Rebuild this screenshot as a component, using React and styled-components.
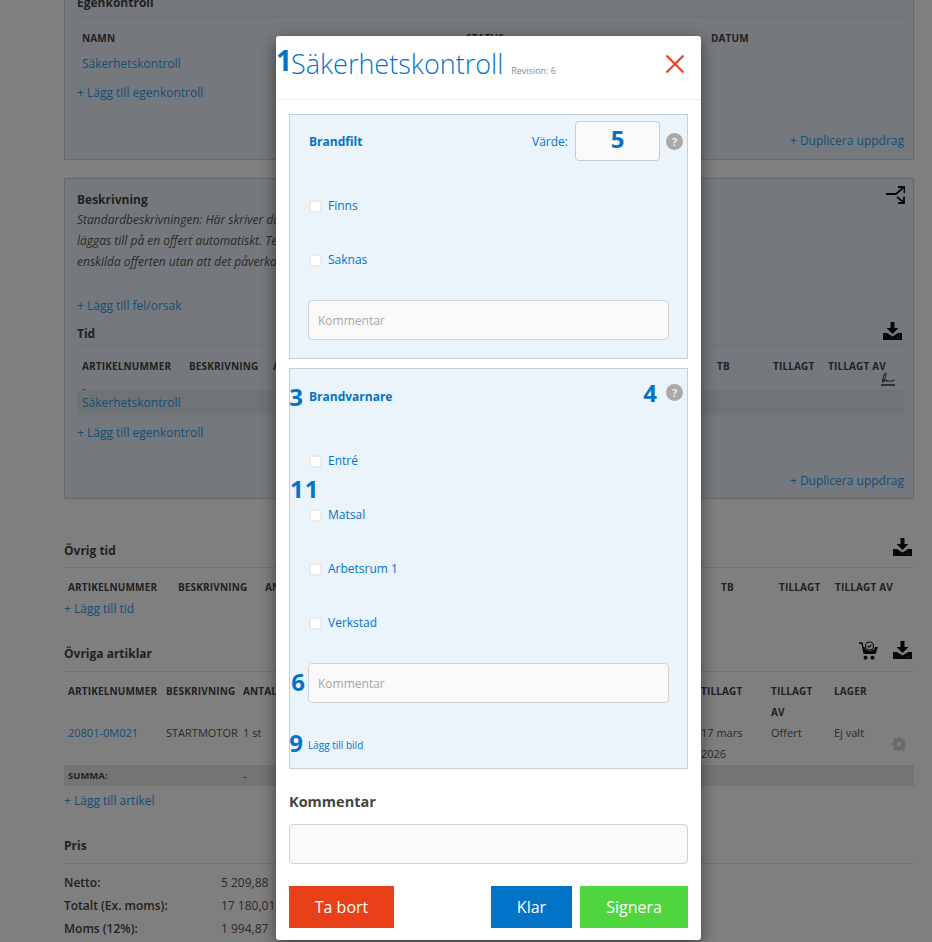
import React from 'react'
import styled, { createGlobalStyle } from 'styled-components'

const GlobalStyle = createGlobalStyle`
    html, body {
        margin: 0;
        padding: 0;
        background: #ffffff;
        font-family: 'Open Sans', sans-serif;
        font-size: 12px;
        color: #555555;
    }
`

const BLUE = '#0373c8'
const DIM_LINK = '#2d9bee'

const DownloadIcon = () => (
    <svg width="19" height="18" viewBox="0 0 19 18">
        <path d="M7.500 0h4v6h4l-6 6-6-6h4z" fill="#111" />
        <path d="M0 11h4l5.500 3.500L15 11h4v7H0z" fill="#111" />
        <rect x="14" y="15.500" width="1" height="1" fill="#777" />
        <rect x="16" y="15.500" width="1" height="1" fill="#777" />
    </svg>
)

const SplitIcon = () => (
    <svg width="19" height="18" viewBox="0 0 19 18" fill="none" stroke="#111" strokeWidth="1.8">
        <path d="M0 8h10l8-7" />
        <path d="M12 1h6.500v6" />
        <path d="M11 11l7 5.500" />
        <path d="M18 10.500V17h-6" />
    </svg>
)

const SignatureIcon = () => (
    <svg width="15" height="14" viewBox="0 0 15 14" fill="none" stroke="#111" strokeWidth="0.9">
        <path d="M1.500 9.500C2 6 3 1.500 4.500 1c1.500 0-.5 6-2.500 8.500C1 10.500 3 10.500 5 7.500c0 2 .5 2.500 1.500 1 .5 1.500 1 1.500 2 0 1 .500 1 1.500 2.500 .5l2.500-1" />
        <path d="M0 13h14" strokeWidth="1.300" />
    </svg>
)

const CartIcon = () => (
    <svg width="19" height="19" viewBox="0 0 19 19" fill="none">
        <path d="M0 2h3l2 10h11" stroke="#111" strokeWidth="1.300" />
        <path d="M4 6h1.500a5.500 5.500 0 0 0 10.500 0h3l-2.500 7H5.500z" fill="#111" />
        <circle cx="10.500" cy="5" r="4" stroke="#111" strokeWidth="1.100" />
        <path d="M8.800 5l1.300 1.300 2.300-2.500" stroke="#111" strokeWidth="1.100" />
        <circle cx="6.500" cy="16.800" r="2" fill="#111" />
        <circle cx="13.500" cy="16.800" r="2" fill="#111" />
    </svg>
)

const GearIcon = () => (
    <svg width="14" height="14" viewBox="0 0 14 14">
        <path
            fill="#d4d4d4"
            fillRule="evenodd"
            d="M5.700 0h2.600l.3 1.900 1.200.5 1.600-1.100 1.800 1.800-1.100 1.600.5 1.200 1.900.3v2.600l-1.900.3-.5 1.200 1.100 1.600-1.800 1.800-1.600-1.100-1.200.5-.3 1.900H5.700l-.3-1.900-1.200-.5-1.600 1.100-1.800-1.800 1.100-1.600-.5-1.200L0 8.300V5.700l1.900-.3.5-1.200-1.100-1.600 1.800-1.800 1.600 1.100 1.200-.5zM7 4.700a2.300 2.300 0 1 0 0 4.600 2.300 2.300 0 0 0 0-4.600z"
        />
    </svg>
)

const CloseIcon = () => (
    <svg width="20" height="20" viewBox="0 0 20 20" fill="none" stroke="#e8431a" strokeWidth="2.200">
        <path d="M1.500 1.500l17 17M18.500 1.500l-17 17" />
    </svg>
)

const Page = styled.div`
    position: relative;
    width: 932px;
    height: 942px;
    overflow: hidden;
`

const Content = styled.div`
    width: 850px;
    margin: -8px 0 0 64px;
`

const Panel = styled.section`
    box-sizing: border-box;
    width: 850px;
    padding: ${({ $top }) => $top}px 9px ${({ $bottom }) => $bottom}px 12px;
    margin-bottom: 18px;
    background: #ebf3fb;
    border: 1px solid #cdd3d8;
`

const HeadingRow = styled.div`
    display: flex;
    justify-content: space-between;
    align-items: flex-start;
    margin-top: ${({ $mt }) => $mt ?? 0}px;
    padding-bottom: ${({ $pad }) => $pad ?? 3}px;
    border-bottom: ${({ $plain }) => ($plain ? 'none' : '1px solid #e4e4e4')};
`

const Heading = styled.h3`
    margin: 0;
    font-size: 12px;
    line-height: 20px;
    font-weight: 700;
    color: #444444;
`

const Icons = styled.div`
    display: flex;
    gap: 15px;
    margin-top: ${({ $up }) => -($up ?? 0)}px;
    margin-right: ${({ $right }) => $right ?? 2}px;
    height: 18px;
`

const Description = styled.p`
    margin: ${({ $mt }) => $mt ?? 0}px 0 0;
    font-size: 12px;
    line-height: 21px;
    font-style: italic;
    color: #555555;
    white-space: nowrap;
`

const TableGrid = styled.div`
    display: grid;
    grid-template-columns: ${({ $cols }) => $cols};
    padding-left: ${({ $indent }) => $indent}px;
    margin-top: ${({ $mt }) => $mt ?? 0}px;
    height: ${({ $h }) => ($h ? `${$h}px` : 'auto')};
    align-items: ${({ $center }) => ($center ? 'center' : 'start')};
    background: ${({ $shade }) => $shade ?? 'transparent'};
`

const HeadCell = styled.div`
    font-size: 10px;
    line-height: 21px;
    font-weight: 700;
    color: #444444;
    white-space: nowrap;
    letter-spacing: 0.15px;
    ${({ $wrap }) => $wrap && 'white-space: normal; width: 50px;'}
`

const Cell = styled.div`
    position: relative;
    font-size: 11px;
    line-height: 21px;
    color: #555555;
    ${({ $wrap }) => $wrap && 'width: 50px;'}
`

const TableLink = styled.a`
    font-size: ${({ $small }) => ($small ? 11 : 12)}px;
    line-height: ${({ $small }) => ($small ? 21 : 25)}px;
    color: ${DIM_LINK};
`

const SumLabel = styled.div`
    font-size: 9.5px;
    font-weight: 700;
    color: #444444;
`

const AddLink = styled.a`
    display: block;
    font-size: 12px;
    line-height: 20px;
    margin-top: ${({ $mt }) => $mt ?? 0}px;
    color: ${DIM_LINK};
    text-align: ${({ $right }) => ($right ? 'right' : 'left')};
`

const PlainSection = styled.section`
    margin-top: ${({ $mt }) => $mt}px;
`

const SignatureSlot = styled.span`
    position: absolute;
    right: 8px;
    top: 15px;
`

const GearSlot = styled.span`
    position: absolute;
    right: 8px;
    top: 14px;
`

const PriceRow = styled.div`
    display: grid;
    grid-template-columns: 157px 1fr;
    font-size: 12px;
    line-height: 23px;
    color: #555555;
`

const PriceLabel = styled.span`
    font-weight: 600;
    color: #444444;
`

const Backdrop = styled.div`
    position: absolute;
    inset: 0;
    background: rgba(0, 0, 0, 0.5);
`

const Modal = styled.div`
    position: absolute;
    left: 276px;
    top: 36px;
    box-sizing: border-box;
    width: 425px;
    height: 904px;
    background: #ffffff;
    border-radius: 3px;
    box-shadow: 0 5px 15px rgba(0, 0, 0, 0.5);
`

const ModalHeader = styled.header`
    position: relative;
    display: flex;
    align-items: center;
    box-sizing: border-box;
    height: 64px;
    padding: 0 16px 8px 15px;
    border-bottom: 1px solid #eeeeee;
`

const ModalTitle = styled.h2`
    margin: 0;
    font-size: 27px;
    line-height: 56px;
    font-weight: 300;
    color: ${BLUE};
    white-space: nowrap;
`

const Revision = styled.span`
    margin: 14px 0 0 8px;
    font-size: 9px;
    color: #888888;
`

const CloseButton = styled.button`
    display: flex;
    margin-left: auto;
    padding: 0;
    border: 0;
    background: none;
`

const ModalBody = styled.div`
    padding: 14px 13px 0;
`

const CheckSection = styled.section`
    position: relative;
    box-sizing: border-box;
    padding: ${({ $top }) => $top}px 4px ${({ $bottom }) => $bottom}px 18px;
    margin-bottom: 9px;
    background: #ebf3fb;
    border: 1px solid #c9cfd4;
`

const SectionHead = styled.div`
    display: flex;
    align-items: center;
    height: 40px;
    margin-bottom: 17px;
`

const SectionTitle = styled.h4`
    position: relative;
    margin: 0 auto 0 1px;
    font-size: 12px;
    font-weight: 700;
    color: ${BLUE};
`

const ValueLabel = styled.span`
    margin-right: 7px;
    font-size: 12px;
    color: ${BLUE};
`

const ValueBox = styled.div`
    box-sizing: border-box;
    width: 85px;
    height: 40px;
    margin-right: 6px;
    font-size: 24px;
    font-weight: 700;
    line-height: 34px;
    text-align: center;
    color: ${BLUE};
    background: #f9f9f9;
    border: 1px solid #cccccc;
    border-radius: 4px;
`

const Help = styled.span`
    position: relative;
    top: ${({ $up }) => ($up ? -4 : 0)}px;
    display: flex;
    align-items: center;
    justify-content: center;
    width: 17px;
    height: 17px;
    font-size: 11px;
    font-weight: 700;
    color: #eeeeee;
    background: #a9a9a9;
    border-radius: 50%;
`

const CheckRow = styled.label`
    display: flex;
    align-items: center;
    gap: 6px;
    box-sizing: border-box;
    height: 54px;
    padding-left: 1px;
    font-size: 12px;
    color: ${BLUE};
`

const CheckBox = styled.span`
    box-sizing: border-box;
    width: 13px;
    height: 13px;
    margin-top: 2px;
    background: #ffffff;
    border: 2px solid #ebebeb;
    border-radius: 3px;
`

const InputWrap = styled.div`
    position: relative;
    margin-top: 14px;
`

const FakeInput = styled.div`
    box-sizing: border-box;
    width: ${({ $w }) => $w}px;
    height: 40px;
    padding-left: 9px;
    font-size: 12px;
    line-height: 40px;
    color: #a8a8a8;
    background: #f9f9f9;
    border: 1px solid #d2d2d2;
    border-radius: 4px;
`

const ImageRow = styled.div`
    position: relative;
    margin-top: 32px;
    font-size: 10px;
    line-height: 20px;
    color: ${BLUE};
`

const Marker = styled.span`
    position: absolute;
    font-size: ${({ $size }) => $size ?? 24}px;
    line-height: 30px;
    font-weight: 700;
    color: ${BLUE};
    ${({ $pos }) => $pos}
`

const InlineMarker = styled.span`
    position: relative;
    top: -3px;
    margin-right: 9px;
    font-size: 24px;
    line-height: 30px;
    font-weight: 700;
    color: ${BLUE};
`

const CommentLabel = styled.div`
    margin-top: 23px;
    font-size: 14.5px;
    line-height: 20px;
    font-weight: 700;
    color: #444444;
`

const CommentBox = styled(FakeInput)`
    margin-top: 12px;
`

const Actions = styled.div`
    display: flex;
    gap: 8px;
    margin-top: 22px;
`

const ActionButton = styled.button`
    width: ${({ $w }) => $w}px;
    height: 42px;
    margin-right: ${({ $push }) => ($push ? 'auto' : '0')};
    padding: 0;
    font-family: 'Open Sans', sans-serif;
    font-size: 16px;
    color: #ffffff;
    background: ${({ $bg }) => $bg};
    border: 0;
`

const timeCols = '107px 84px 444px 56px 55px 1fr'
const otherCols = '110px 87px 456px 58px 56px 1fr'
const articleCols = '98px 77px 458px 70px 63px 1fr'

const Background = () => (
    <Content>
        <Panel $top={0} $bottom={8}>
            <HeadingRow><Heading>Egenkontroll</Heading></HeadingRow>
            <TableGrid $cols="384px 245px 1fr" $indent={5} $mt={11}>
                <HeadCell>NAMN</HeadCell>
                <HeadCell>STATUS</HeadCell>
                <HeadCell>DATUM</HeadCell>
            </TableGrid>
            <TableGrid $cols="1fr" $indent={5} $mt={2}>
                <TableLink>Säkerhetskontroll</TableLink>
            </TableGrid>
            <AddLink $mt={7}>+ Lägg till egenkontroll</AddLink>
            <AddLink $mt={28} $right>+ Duplicera uppdrag</AddLink>
        </Panel>

        <Panel $top={11} $bottom={7}>
            <HeadingRow $plain $pad={0}>
                <Heading>Beskrivning</Heading>
                <Icons $right={-1} $up={4}><SplitIcon /></Icons>
            </HeadingRow>
            <Description $mt={-1}>Standardbeskrivningen: Här skriver du in en standardbeskrivning som ska</Description>
            <Description>läggas till på en offert automatiskt. Texten kan sedan redigeras på den</Description>
            <Description>enskilda offerten utan att det påverkar standardbeskrivningen.</Description>
            <AddLink $mt={24}>+ Lägg till fel/orsak</AddLink>
            <HeadingRow $mt={8} $pad={1}>
                <Heading>Tid</Heading>
                <Icons $up={2}><DownloadIcon /></Icons>
            </HeadingRow>
            <TableGrid $cols={timeCols} $indent={5} $mt={10}>
                <HeadCell>ARTIKELNUMMER</HeadCell>
                <HeadCell>BESKRIVNING</HeadCell>
                <HeadCell>ANTAL</HeadCell>
                <HeadCell>TB</HeadCell>
                <HeadCell>TILLAGT</HeadCell>
                <Cell>
                    <HeadCell>TILLAGT AV</HeadCell>
                    <SignatureSlot><SignatureIcon /></SignatureSlot>
                </Cell>
            </TableGrid>
            <TableGrid $cols="1fr" $indent={5} $h={13} $center>
                <Cell>-</Cell>
            </TableGrid>
            <TableGrid $cols="1fr" $indent={5} $h={25} $shade="#dfe6ea">
                <TableLink>Säkerhetskontroll</TableLink>
            </TableGrid>
            <AddLink $mt={8}>+ Lägg till egenkontroll</AddLink>
            <AddLink $mt={28} $right>+ Duplicera uppdrag</AddLink>
        </Panel>

        <PlainSection $mt={42}>
            <HeadingRow $pad={6}>
                <Heading>Övrig tid</Heading>
                <Icons $up={3}><DownloadIcon /></Icons>
            </HeadingRow>
            <TableGrid $cols={otherCols} $indent={4} $mt={9}>
                <HeadCell>ARTIKELNUMMER</HeadCell>
                <HeadCell>BESKRIVNING</HeadCell>
                <HeadCell>ANTAL</HeadCell>
                <HeadCell>TB</HeadCell>
                <HeadCell>TILLAGT</HeadCell>
                <HeadCell>TILLAGT AV</HeadCell>
            </TableGrid>
            <AddLink $mt={1}>+ Lägg till tid</AddLink>
        </PlainSection>

        <PlainSection $mt={25}>
            <HeadingRow $pad={7}>
                <Heading>Övriga artiklar</Heading>
                <Icons $up={3}><CartIcon /><DownloadIcon /></Icons>
            </HeadingRow>
            <TableGrid $cols={articleCols} $indent={4} $mt={9}>
                <HeadCell>ARTIKELNUMMER</HeadCell>
                <HeadCell>BESKRIVNING</HeadCell>
                <HeadCell>ANTAL</HeadCell>
                <HeadCell>TILLAGT</HeadCell>
                <HeadCell $wrap>TILLAGT AV</HeadCell>
                <HeadCell>LAGER</HeadCell>
            </TableGrid>
            <TableGrid $cols={articleCols} $indent={4} $mt={-1}>
                <TableLink $small>20801-0M021</TableLink>
                <Cell>STARTMOTOR</Cell>
                <Cell>1 st</Cell>
                <Cell $wrap>17 mars 2026</Cell>
                <Cell>Offert</Cell>
                <Cell>
                    Ej valt
                    <GearSlot><GearIcon /></GearSlot>
                </Cell>
            </TableGrid>
            <TableGrid $cols="175px 1fr" $indent={4} $h={21} $mt={1} $center $shade="#e9e9e9">
                <SumLabel>SUMMA:</SumLabel>
                <Cell>-</Cell>
            </TableGrid>
            <AddLink $mt={5}>+ Lägg till artikel</AddLink>
        </PlainSection>

        <PlainSection $mt={25}>
            <HeadingRow $pad={7}><Heading>Pris</Heading></HeadingRow>
            <TableGrid $cols="1fr" $indent={0} $mt={7}>
                <PriceRow><PriceLabel>Netto:</PriceLabel><span>5 209,88</span></PriceRow>
                <PriceRow><PriceLabel>Totalt (Ex. moms):</PriceLabel><span>17 180,01</span></PriceRow>
                <PriceRow><PriceLabel>Moms (12%):</PriceLabel><span>1 994,87</span></PriceRow>
            </TableGrid>
        </PlainSection>
    </Content>
)

const Check = ({ label }) => (
    <CheckRow><CheckBox />{label}</CheckRow>
)

export default function App() {
    return (
        <Page>
            <GlobalStyle />
            <Background />
            <Backdrop />
            <Modal>
                <ModalHeader>
                    <Marker $size={28} $pos="left: 0; top: 9px;">1</Marker>
                    <ModalTitle>Säkerhetskontroll</ModalTitle>
                    <Revision>Revision: 6</Revision>
                    <CloseButton aria-label="Stäng"><CloseIcon /></CloseButton>
                </ModalHeader>
                <ModalBody>
                    <CheckSection $top={6} $bottom={18}>
                        <SectionHead>
                            <SectionTitle>Brandfilt</SectionTitle>
                            <ValueLabel>Värde:</ValueLabel>
                            <ValueBox>5</ValueBox>
                            <Help>?</Help>
                        </SectionHead>
                        <Check label="Finns" />
                        <Check label="Saknas" />
                        <InputWrap><FakeInput $w={361}>Kommentar</FakeInput></InputWrap>
                    </CheckSection>

                    <CheckSection $top={7} $bottom={13}>
                        <SectionHead>
                            <SectionTitle>
                                <Marker $pos="right: 100%; margin-right: 6px; top: -6px;">3</Marker>
                                Brandvarnare
                            </SectionTitle>
                            <InlineMarker>4</InlineMarker>
                            <Help $up>?</Help>
                        </SectionHead>
                        <Marker $pos="left: 0; top: 105px; letter-spacing: 1px;">11</Marker>
                        <Check label="Entré" />
                        <Check label="Matsal" />
                        <Check label="Arbetsrum 1" />
                        <Check label="Verkstad" />
                        <InputWrap>
                            <Marker $pos="right: 100%; margin-right: 3px; top: 4px;">6</Marker>
                            <FakeInput $w={361}>Kommentar</FakeInput>
                        </InputWrap>
                        <ImageRow>
                            <Marker $pos="right: 100%; margin-right: 5px; top: -7px;">9</Marker>
                            Lägg till bild
                        </ImageRow>
                    </CheckSection>

                    <CommentLabel>Kommentar</CommentLabel>
                    <CommentBox $w={399} />
                    <Actions>
                        <ActionButton $w={105} $bg="#e8411a" $push>Ta bort</ActionButton>
                        <ActionButton $w={81} $bg="#0373c8">Klar</ActionButton>
                        <ActionButton $w={108} $bg="#4fd53e">Signera</ActionButton>
                    </Actions>
                </ModalBody>
            </Modal>
        </Page>
    )
}
